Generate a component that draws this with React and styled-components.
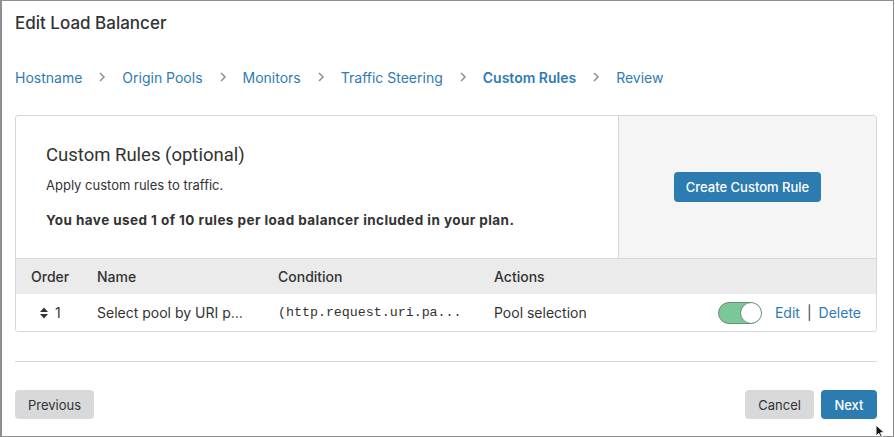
import React from 'react';
import styled, { createGlobalStyle } from 'styled-components';

const GlobalStyle = createGlobalStyle`
  html, body {
    margin: 0;
    padding: 0;
    background: #fff;
  }
  body {
    font-family: Inter, "Noto Sans", "Liberation Sans", sans-serif;
    color: #333;
  }
`;

const Frame = styled.div`
  position: relative;
  box-sizing: border-box;
  width: 894px;
  height: 437px;
  border: 1px solid #8e8e8e;
  border-left-width: 2px;
  background: #fff;
  padding: 0 16px 0 13px;
  display: flex;
  flex-direction: column;
`;

const Title = styled.h1`
  margin: 11px 0 0;
  font-size: 17px;
  font-weight: 500;
  color: #333;
  line-height: 22px;
`;

const Crumbs = styled.nav`
  display: flex;
  align-items: center;
  margin-top: 33px;
  height: 20px;
`;

const Crumb = styled.span`
  font-size: 14px;
  color: #2f7bb3;
  font-weight: ${p => (p.active ? 600 : 400)};
  white-space: nowrap;
`;

const Chevron = styled.span`
  display: inline-flex;
  width: 40px;
  justify-content: center;
  color: #8f8f8f;
`;

const Card = styled.section`
  margin-top: 28px;
  border: 1px solid #d6d6d6;
  border-radius: 3px;
  overflow: hidden;
`;

const Intro = styled.div`
  display: grid;
  grid-template-columns: 1fr 258px;
  height: 142px;
  border-bottom: 1px solid #d6d6d6;
`;

const IntroText = styled.div`
  padding: 28px 30px 0;
`;

const IntroSide = styled.div`
  background: #f5f5f5;
  border-left: 1px solid #d6d6d6;
  display: flex;
  align-items: center;
  justify-content: center;
`;

const Heading = styled.h2`
  margin: 0;
  font-family: Roboto, "Liberation Sans", sans-serif;
  font-size: 18.5px;
  font-weight: 400;
  color: #333;
  line-height: 22px;
`;

const Para = styled.p`
  margin: ${p => p.gap}px 0 0;
  font-family: Inter, "Liberation Sans", sans-serif;
  font-size: ${p => (p.bold ? 13.5 : 13)}px;
  line-height: 18px;
  font-weight: ${p => (p.bold ? 700 : 400)};
  letter-spacing: ${p => (p.bold ? 0.43 : 0)}px;
  color: #333;
`;

const Button = styled.button`
  border: none;
  border-radius: 4px;
  cursor: pointer;
  font-family: Inter, "Liberation Sans", sans-serif;
  font-size: 13px;
  font-weight: ${p => (p.primary ? 500 : 400)};
  height: ${p => p.h || 29}px;
  padding: 0 ${p => p.px || 14}px;
  background: ${p => (p.primary ? '#2c7cb1' : '#d8d9db')};
  color: ${p => (p.primary ? '#fff' : '#333')};
`;

const Row = styled.div`
  display: grid;
  grid-template-columns: 66px 181px 216px 1fr auto;
  align-items: center;
  padding: 0 15px;
  height: ${p => (p.head ? 35 : 37)}px;
  background: ${p => (p.head ? '#ebebeb' : '#fff')};
  font-size: 14px;
  font-weight: ${p => (p.head ? 500 : 400)};
  color: #333;
`;

const OrderCell = styled.div`
  display: flex;
  align-items: center;
  gap: 6px;
  padding-left: 8px;
`;

const Mono = styled.span`
  font-family: "Liberation Mono", monospace;
  font-size: 13.3px;
  color: #333;
`;

const ActionCell = styled.div`
  display: flex;
  align-items: center;
`;

const Toggle = styled.span`
  position: relative;
  box-sizing: border-box;
  width: 44px;
  height: 22px;
  border-radius: 11px;
  border: 1px solid #6a8d78;
  background: #7bc795;
  margin-right: 13px;

  &::after {
    content: '';
    position: absolute;
    right: 0;
    top: 0;
    width: 20px;
    height: 20px;
    border-radius: 50%;
    background: #fff;
    box-shadow: -1px 0 0 #6a8d78;
  }
`;

const LinkText = styled.a`
  color: #2f7bb3;
  font-size: 14px;
  text-decoration: none;
`;

const Pipe = styled.span`
  color: #444;
  margin: 0 7px 0 7px;
`;

const Divider = styled.hr`
  margin: 29px 0 0;
  border: none;
  border-top: 1px solid #d6d6d6;
`;

const Footer = styled.div`
  display: flex;
  justify-content: space-between;
  margin-top: 28px;
`;

const Group = styled.div`
  display: flex;
  gap: 7px;
`;

const Cursor = styled.svg`
  position: absolute;
  left: 873px;
  top: 423px;
`;

const SortIcon = () => (
  <svg width="10" height="12" viewBox="0 0 10 12">
    <path d="M5 0.5 L9 5 H1 Z" fill="#333" />
    <path d="M5 11.5 L9 7 H1 Z" fill="#333" />
  </svg>
);

const Arrow = () => (
  <svg width="8" height="10" viewBox="0 0 8 10">
    <path d="M2 1 L6 5 L2 9" fill="none" stroke="#8f8f8f" strokeWidth="1.5" />
  </svg>
);

const steps = ['Hostname', 'Origin Pools', 'Monitors', 'Traffic Steering', 'Custom Rules', 'Review'];

export default function App() {
  return (
    <>
      <GlobalStyle />
      <Frame>
        <Title>Edit Load Balancer</Title>
        <Crumbs>
          {steps.map((s, i) => (
            <React.Fragment key={s}>
              {i > 0 && (
                <Chevron>
                  <Arrow />
                </Chevron>
              )}
              <Crumb active={s === 'Custom Rules'}>{s}</Crumb>
            </React.Fragment>
          ))}
        </Crumbs>

        <Card>
          <Intro>
            <IntroText>
              <Heading>Custom Rules (optional)</Heading>
              <Para gap={10}>Apply custom rules to traffic.</Para>
              <Para gap={17} bold>
                You have used 1 of 10 rules per load balancer included in your plan.
              </Para>
            </IntroText>
            <IntroSide>
              <Button primary h={30} px={12}>Create Custom Rule</Button>
            </IntroSide>
          </Intro>
          <Row head>
            <div>Order</div>
            <div>Name</div>
            <div>Condition</div>
            <div>Actions</div>
            <div />
          </Row>
          <Row>
            <OrderCell>
              <SortIcon />
              <span>1</span>
            </OrderCell>
            <div>Select pool by URI p…</div>
            <Mono>(http.request.uri.pa...</Mono>
            <div>Pool selection</div>
            <ActionCell>
              <Toggle />
              <LinkText>Edit</LinkText>
              <Pipe>|</Pipe>
              <LinkText>Delete</LinkText>
            </ActionCell>
          </Row>
        </Card>

        <Divider />

        <Footer>
          <Button px={13}>Previous</Button>
          <Group>
            <Button px={13}>Cancel</Button>
            <Button primary px={13.5}>Next</Button>
          </Group>
        </Footer>

        <Cursor width="12" height="14" viewBox="0 0 12 14">
          <path d="M1 1 L1 12 L3.8 9.4 L5.8 13.5 L7.4 12.8 L5.5 8.8 L9.2 8.6 Z" fill="#111" stroke="#fff" strokeWidth="1" />
        </Cursor>
      </Frame>
    </>
  );
}
